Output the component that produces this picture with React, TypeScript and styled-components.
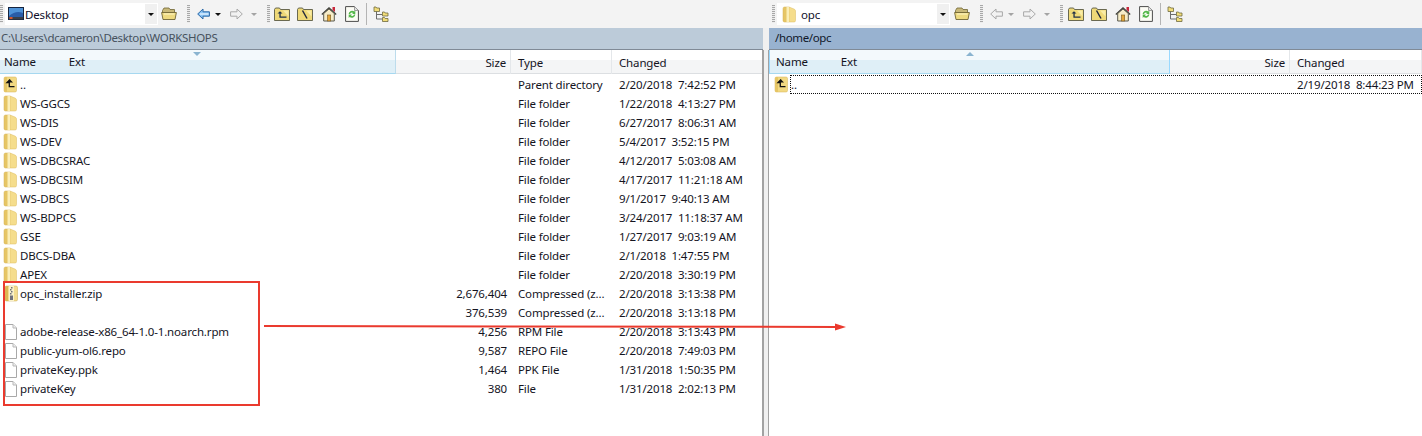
import React from "react";
import styled, {createGlobalStyle} from "styled-components";

const GlobalStyle = createGlobalStyle`
  html, body {
    margin: 0;
    padding: 0;
    background: #fff;
  }
  body {
    font-family: "Noto Sans", "Open Sans", sans-serif;
    font-size: 11.5px;
    letter-spacing: -0.15px;
    color: #111;
  }
`;

const Window = styled.div`
  position: relative;
  width: 1422px;
  height: 436px;
  overflow: hidden;
  display: grid;
  grid-template-columns: 763px 6px 653px;
  grid-template-rows: 28px 1fr;
  background: #f0f0f0;
`;

const Toolbar = styled.div<{$left: number}>`
  grid-row: 1;
  display: flex;
  align-items: center;
  height: 28px;
  padding-left: ${p => p.$left}px;
  background: #f3f3f3;
`;

const ToolbarGap = styled.div`
  grid-row: 1;
  background: #f3f3f3;
`;

const Grip = styled.span<{$ml: number}>`
  width: 3px;
  height: 18px;
  margin-left: ${p => p.$ml}px;
  flex: none;
  background: repeating-linear-gradient(to bottom, #a8a8a8 0 1px, #ededed 1px 2px);
`;

const Combo = styled.div<{$width: number}>`
  width: ${p => p.$width}px;
  height: 22px;
  margin-left: 2px;
  flex: none;
  display: flex;
  align-items: center;
  background: #fff;
  padding-left: 3px;
  box-sizing: border-box;
  color: #10102a;
`;

const ComboLabel = styled.span`
  flex: 1;
  margin-left: 1px;
`;

const ComboFolder = styled.span`
  display: flex;
  margin-right: 3px;
`;

const ComboButton = styled.span`
  width: 12px;
  height: 20px;
  margin-right: 1px;
  display: flex;
  align-items: center;
  justify-content: center;
  background: #f0f0f0;
`;

const Caret = styled.span<{$off?: boolean}>`
  width: 0;
  height: 0;
  border-left: 3px solid transparent;
  border-right: 3px solid transparent;
  border-top: 3px solid ${p => (p.$off ? "#a4a4a4" : "#111")};
`;

const ToolIcon = styled.span<{$ml: number; $w?: number}>`
  display: flex;
  flex: none;
  align-items: center;
  justify-content: center;
  width: ${p => p.$w ?? 16}px;
  height: 18px;
  margin-left: ${p => p.$ml}px;
`;

const ToolSep = styled.span<{$ml: number}>`
  width: 1px;
  height: 22px;
  margin-left: ${p => p.$ml}px;
  flex: none;
  background: #b4b4b4;
`;

const Pane = styled.div`
  grid-row: 2;
  display: flex;
  flex-direction: column;
  min-width: 0;
`;

const PathBar = styled.div<{$active?: boolean}>`
  height: 22px;
  line-height: 20px;
  padding-left: ${p => (p.$active ? 6 : 1)}px;
  box-sizing: border-box;
  background: ${p => (p.$active ? "#98b2d0" : "#bccbd9")};
  color: ${p => (p.$active ? "#10182a" : "#47525e")};
  border-bottom: 1px solid #808a96;
  letter-spacing: -0.35px;
`;

const Divider = styled.div`
  grid-row: 2;
  background: #f0f0f0;
  position: relative;
  &::after {
    content: "";
    position: absolute;
    left: -1px;
    right: 0;
    top: 22px;
    bottom: 0;
    border-left: 2px solid #a2a2a2;
    border-right: 1px solid #a2a2a2;
  }
`;

const List = styled.div`
  flex: 1;
  background: #fff;
`;

const Header = styled.div<{$cols: string}>`
  position: relative;
  display: grid;
  grid-template-columns: ${p => p.$cols};
  height: 24px;
  box-sizing: border-box;
  background: linear-gradient(to bottom, #fff 0 10px, #f4f5f6 10px 23px);
  border-bottom: 1px solid #dcdfe2;
`;

const HeaderCell = styled.div<{$sorted?: boolean; $right?: boolean; $pad: number; $inset?: boolean}>`
  display: flex;
  align-items: center;
  justify-content: ${p => (p.$right ? "flex-end" : "flex-start")};
  height: 24px;
  box-sizing: border-box;
  ${p => (p.$right ? `padding-right: ${p.$pad}px;` : `padding-left: ${p.$pad}px;`)}
  border-right: 1px solid #e4e7ea;
  color: #14141e;
  ${p =>
    p.$sorted &&
    `background: linear-gradient(to bottom, #f3f9fc 0 10px, #dfeff7 10px 23px);
     border-bottom: 1px solid #a6d8f0;
     border-right: 1px solid ${p.$inset ? "#99d9ff" : "#bcdcec"};
     ${p.$inset ? "border-left: 1px solid #99d9ff;" : ""}`}
`;

const ExtLabel = styled.span`
  margin-left: 33px;
`;

const SortMark = styled.span<{$x: number; $up?: boolean}>`
  position: absolute;
  left: ${p => p.$x}px;
  top: 2px;
  width: 0;
  height: 0;
  border-left: 4px solid transparent;
  border-right: 4px solid transparent;
  ${p => (p.$up ? "border-bottom: 4px solid #8ab4d0;" : "border-top: 4px solid #8ab4d0;")}
`;

const Rows = styled.div`
  padding-top: 1px;
`;

const Row = styled.div<{$cols: string}>`
  position: relative;
  display: grid;
  grid-template-columns: ${p => p.$cols};
  height: 19px;
  box-sizing: border-box;
  padding-bottom: 1px;
  align-items: center;
  white-space: pre;
  color: #14141e;
`;

const FocusRing = styled.span`
  position: absolute;
  left: 21px;
  right: 0;
  top: 0;
  bottom: 0;
  border: 1px dotted #111;
`;

const NameCell = styled.div<{$inset: number}>`
  display: flex;
  align-items: center;
  padding-left: ${p => p.$inset}px;
  min-width: 0;
`;

const NameText = styled.span`
  margin-left: 2px;
`;

const SizeCell = styled.div<{$pad: number}>`
  text-align: right;
  padding-right: ${p => p.$pad}px;
`;

const PlainCell = styled.div`
  padding-left: 7px;
`;

const Callout = styled.div`
  position: absolute;
  left: 3px;
  top: 281px;
  width: 257px;
  height: 125px;
  box-sizing: border-box;
  border: 2px solid #ea3a2e;
`;

const ArrowLine = styled.svg`
  position: absolute;
  left: 264px;
  top: 320px;
`;

// vista style folder, a narrow tall book shape in the file list
const FolderIcon = () => (
    <svg width="17" height="17" viewBox="0 0 17 17">
        <path d="M3 2.5 Q3 1 4.5 1 H9 V16 H4.5 Q3 16 3 14.5 Z" fill="#e6c564" stroke="#d4b354" strokeWidth=".5" />
        <path d="M9 1 L14 3 Q15.5 3.6 15.5 5 V14.5 Q15.5 16 14 16 H9 Z" fill="#f5dd8c" stroke="#dcbd60" strokeWidth=".5" />
        <path d="M6.5 1 H9 V16 H6.5 Z" fill="#fbeeb6" />
    </svg>
);

const ParentIcon = () => (
    <svg width="17" height="17" viewBox="0 0 17 17">
        <path d="M3 2.5 Q3 1 4.5 1 H14 Q15.5 1 15.5 2.5 V14.5 Q15.5 16 14 16 H4.5 Q3 16 3 14.5 Z" fill="#f2d982" stroke="#d4b354" strokeWidth=".5" />
        <path d="M3 2.5 Q3 1 4.5 1 H6 V16 H4.5 Q3 16 3 14.5 Z" fill="#e6c564" />
        <path d="M9 3.5 L6 6.5 H8.3 V10.6 H13.5" fill="none" stroke="#111" strokeWidth="1.3" />
        <path d="M9 3.5 L6 6.5 H12 Z" fill="#111" />
    </svg>
);

const ZipIcon = () => (
    <svg width="17" height="17" viewBox="0 0 17 17">
        <path d="M4 2.5 Q4 1 5.5 1 H15 Q16.5 1 16.5 2.5 V14.5 Q16.5 16 15 16 H5.5 Q4 16 4 14.5 Z" fill="#f3dc90" stroke="#c8a94e" strokeWidth=".5" />
        <path d="M4 2.5 Q4 1 5.5 1 H7 V16 H5.5 Q4 16 4 14.5 Z" fill="#dcb654" />
        <path d="M8 1 H13 V16 H8 Z" fill="#fbf2c8" />
        <path d="M10 2 H11.5 V3.5 H10 Z M9 4 H10.5 V5.5 H9 Z M10 6 H11.5 V7.5 H10 Z M9 8 H10.5 V9.5 H9 Z M9 10.5 H12 V15 H9 Z" fill="#70707c" />
    </svg>
);

const PageIcon = () => (
    <svg width="17" height="17" viewBox="0 0 17 17">
        <path d="M4.5 1.5 H12 L15.5 5 V16.5 H4.5 Z" fill="#fff" stroke="#a8a8a8" />
        <path d="M12 1.5 V5 H15.5" fill="#eee" stroke="#b8b8b8" />
    </svg>
);

const DesktopIcon = () => (
    <svg width="16" height="14" viewBox="0 0 16 14">
        <rect x=".5" y=".5" width="15" height="12" fill="#2a5da8" stroke="#16243e" />
        <path d="M1 1 H15 V6 Q8 3 1 9 Z" fill="#4f93d8" />
        <rect x="1" y="10" width="14" height="2.5" fill="#3a3f48" />
        <rect x="1.5" y="10" width="3" height="2" fill="#d8562c" />
    </svg>
);

const OpenFolderIcon = () => (
    <svg width="16" height="14" viewBox="0 0 16 14">
        <path d="M1.5 3.5 L3 1 H8 L9 2.5 H13.5 V6 H1.5 Z" fill="#c8b878" stroke="#6f6434" strokeWidth=".8" />
        <path d="M.6 5.5 H15.4 L14 12.5 H2 Z" fill="#eeda80" stroke="#6f6434" strokeWidth=".9" />
        <path d="M3 7 H13.5" stroke="#fff6c8" />
    </svg>
);

const ArrowIcon = ({dir, off}: {dir: "left" | "right"; off?: boolean}) => (
    <svg width="13" height="12" viewBox="0 0 13 12">
        <path
            d={dir === "left" ? "M.7 6 L6 1 V3.8 H12.4 V8.2 H6 V11 Z" : "M12.3 6 L7 1 V3.8 H.6 V8.2 H7 V11 Z"}
            fill={off ? "#f2f2f2" : "#8cc4f4"}
            stroke={off ? "#a8a8a8" : "#2d6aa8"}
        />
        {!off && <path d="M3 6 H11.5" stroke="#e2f2ff" strokeWidth="1.4" />}
    </svg>
);

const ToolFolder = ({kind}: {kind: "up" | "root"}) => (
    <svg width="16" height="14" viewBox="0 0 16 14">
        <path d="M.5 2.5 L1.5 1 H5.5 L6.5 2.5 H15.5 V13.5 H.5 Z" fill="#efd978" stroke="#5a5a44" strokeWidth=".9" />
        <path d="M9 3.5 H14.5 V9.5 Z" fill="#f9eca6" />
        {kind === "up" ? (
            <path d="M3.5 6.5 L6 4.2 L8.5 6.5 H6.7 V9.5 H12.5 V10.7 H5.4 V6.5 Z" fill="#203048" />
        ) : (
            <path d="M5.5 3.5 L10 11.5" stroke="#20283c" strokeWidth="1.4" />
        )}
    </svg>
);

const HomeIcon = () => (
    <svg width="16" height="16" viewBox="0 0 16 16">
        <path d="M11.5 1 H14 V6 L11.5 4 Z" fill="#c8283c" />
        <path d="M.8 8.5 L8 1.8 L15.2 8.5" fill="#f7f0de" stroke="#3a3a34" strokeWidth="1.2" />
        <path d="M2.7 7.5 V15 H13.3 V7.5 L8 3 Z" fill="#f6ecc8" stroke="#4a4a40" strokeWidth=".9" />
        <rect x="6.5" y="9" width="3.2" height="6" fill="#e4a83c" stroke="#7c5a20" strokeWidth=".6" />
    </svg>
);

const RefreshIcon = () => (
    <svg width="14" height="16" viewBox="0 0 14 16">
        <path d="M.6 .6 H9.5 L13.4 4.5 V15.4 H.6 Z" fill="#fdfdf6" stroke="#4c4c4c" />
        <path d="M9.5 .6 V4.5 H13.4" fill="#e2e2e2" stroke="#7c7c7c" strokeWidth=".7" />
        <path d="M3.6 8 A3.6 3.6 0 0 1 9.4 5.6 L10.3 4.6 V8 H7 L8.2 6.9 A2.2 2.2 0 0 0 5 8 Z" fill="#54b84a" />
        <path d="M10.4 8.5 A3.6 3.6 0 0 1 4.6 10.9 L3.7 11.9 V8.5 H7 L5.8 9.6 A2.2 2.2 0 0 0 9 8.5 Z" fill="#54b84a" />
    </svg>
);

const TreeIcon = () => (
    <svg width="16" height="16" viewBox="0 0 16 16">
        <path d="M3.5 5 V13 H9 M3.5 8.5 H9" fill="none" stroke="#6c6c6c" />
        <path d="M1 1 H3 L3.7 2 H6.5 V5.5 H1 Z" fill="#f2dd78" stroke="#6e6a40" strokeWidth=".8" />
        <path d="M9.5 6 H11.5 L12.2 7 H15 V10 H9.5 Z" fill="#f2dd78" stroke="#6e6a40" strokeWidth=".8" />
        <path d="M9.5 11.5 H11.5 L12.2 12.5 H15 V15.5 H9.5 Z" fill="#f2dd78" stroke="#6e6a40" strokeWidth=".8" />
    </svg>
);

interface FileEntry {
    name: string;
    size?: string;
    type: string;
    changed: string;
    icon: "parent" | "folder" | "zip" | "page" | "none";
}

const localFiles: FileEntry[] = [
    {name: "..", type: "Parent directory", changed: "2/20/2018  7:42:52 PM", icon: "parent"},
    {name: "WS-GGCS", type: "File folder", changed: "1/22/2018  4:13:27 PM", icon: "folder"},
    {name: "WS-DIS", type: "File folder", changed: "6/27/2017  8:06:31 AM", icon: "folder"},
    {name: "WS-DEV", type: "File folder", changed: "5/4/2017  3:52:15 PM", icon: "folder"},
    {name: "WS-DBCSRAC", type: "File folder", changed: "4/12/2017  5:03:08 AM", icon: "folder"},
    {name: "WS-DBCSIM", type: "File folder", changed: "4/17/2017  11:21:18 AM", icon: "folder"},
    {name: "WS-DBCS", type: "File folder", changed: "9/1/2017  9:40:13 AM", icon: "folder"},
    {name: "WS-BDPCS", type: "File folder", changed: "3/24/2017  11:18:37 AM", icon: "folder"},
    {name: "GSE", type: "File folder", changed: "1/27/2017  9:03:19 AM", icon: "folder"},
    {name: "DBCS-DBA", type: "File folder", changed: "2/1/2018  1:47:55 PM", icon: "folder"},
    {name: "APEX", type: "File folder", changed: "2/20/2018  3:30:19 PM", icon: "folder"},
    {name: "opc_installer.zip", size: "2,676,404", type: "Compressed (z...", changed: "2/20/2018  3:13:38 PM", icon: "zip"},
    {name: "", size: "376,539", type: "Compressed (z...", changed: "2/20/2018  3:13:18 PM", icon: "none"},
    {name: "adobe-release-x86_64-1.0-1.noarch.rpm", size: "4,256", type: "RPM File", changed: "2/20/2018  3:13:43 PM", icon: "page"},
    {name: "public-yum-ol6.repo", size: "9,587", type: "REPO File", changed: "2/20/2018  7:49:03 PM", icon: "page"},
    {name: "privateKey.ppk", size: "1,464", type: "PPK File", changed: "1/31/2018  1:50:35 PM", icon: "page"},
    {name: "privateKey", size: "380", type: "File", changed: "1/31/2018  2:02:13 PM", icon: "page"},
];

const IconSlot = styled.span`
  width: 17px;
  height: 17px;
  flex: none;
`;

const entryIcon = (icon: FileEntry["icon"]) => {
    if (icon === "parent") return <ParentIcon />;
    if (icon === "folder") return <FolderIcon />;
    if (icon === "zip") return <ZipIcon />;
    if (icon === "page") return <PageIcon />;
    return <IconSlot />;
};

const LEFT_COLS = "396px 115px 101px 1fr";
const RIGHT_COLS = "401px 120px 1fr";

const App = () => (
    <Window>
        <GlobalStyle />

        <Toolbar $left={0}>
            <Grip $ml={0} />
            <Combo $width={153}>
                <DesktopIcon />
                <ComboLabel>Desktop</ComboLabel>
                <ComboButton><Caret /></ComboButton>
            </Combo>
            <ToolIcon $ml={3}><OpenFolderIcon /></ToolIcon>
            <Grip $ml={10} />
            <ToolIcon $ml={5}><ArrowIcon dir="left" /></ToolIcon>
            <ToolIcon $ml={3} $w={8}><Caret /></ToolIcon>
            <ToolIcon $ml={6}><ArrowIcon dir="right" off /></ToolIcon>
            <ToolIcon $ml={6} $w={8}><Caret $off /></ToolIcon>
            <Grip $ml={9} />
            <ToolIcon $ml={4}><ToolFolder kind="up" /></ToolIcon>
            <ToolIcon $ml={7}><ToolFolder kind="root" /></ToolIcon>
            <ToolIcon $ml={8}><HomeIcon /></ToolIcon>
            <ToolIcon $ml={7}><RefreshIcon /></ToolIcon>
            <ToolSep $ml={6} />
            <ToolIcon $ml={6}><TreeIcon /></ToolIcon>
        </Toolbar>
        <ToolbarGap />
        <Toolbar $left={3}>
            <Grip $ml={0} />
            <Combo $width={173}>
                <ComboFolder><FolderIcon /></ComboFolder>
                <ComboLabel>opc</ComboLabel>
                <ComboButton><Caret /></ComboButton>
            </Combo>
            <ToolIcon $ml={4}><OpenFolderIcon /></ToolIcon>
            <Grip $ml={10} />
            <ToolIcon $ml={5}><ArrowIcon dir="left" off /></ToolIcon>
            <ToolIcon $ml={3} $w={8}><Caret $off /></ToolIcon>
            <ToolIcon $ml={6}><ArrowIcon dir="right" off /></ToolIcon>
            <ToolIcon $ml={6} $w={8}><Caret $off /></ToolIcon>
            <Grip $ml={9} />
            <ToolIcon $ml={5}><ToolFolder kind="up" /></ToolIcon>
            <ToolIcon $ml={7}><ToolFolder kind="root" /></ToolIcon>
            <ToolIcon $ml={8}><HomeIcon /></ToolIcon>
            <ToolIcon $ml={7}><RefreshIcon /></ToolIcon>
            <ToolSep $ml={6} />
            <ToolIcon $ml={6}><TreeIcon /></ToolIcon>
        </Toolbar>

        <Pane>
            <PathBar>C:\Users\dcameron\Desktop\WORKSHOPS</PathBar>
            <List>
                <Header $cols={LEFT_COLS}>
                    <HeaderCell $sorted $pad={4}>Name<ExtLabel>Ext</ExtLabel></HeaderCell>
                    <HeaderCell $right $pad={4}>Size</HeaderCell>
                    <HeaderCell $pad={7}>Type</HeaderCell>
                    <HeaderCell $pad={7}>Changed</HeaderCell>
                    <SortMark $x={193} />
                </Header>
                <Rows>
                    {localFiles.map(file => (
                        <Row key={file.name + file.changed} $cols={LEFT_COLS}>
                            <NameCell $inset={1}>
                                {entryIcon(file.icon)}
                                <NameText>{file.name}</NameText>
                            </NameCell>
                            <SizeCell $pad={4}>{file.size}</SizeCell>
                            <PlainCell>{file.type}</PlainCell>
                            <PlainCell>{file.changed}</PlainCell>
                        </Row>
                    ))}
                </Rows>
            </List>
        </Pane>
        <Divider />
        <Pane>
            <PathBar $active>/home/opc</PathBar>
            <List>
                <Header $cols={RIGHT_COLS}>
                    <HeaderCell $sorted $inset $pad={6}>Name<ExtLabel>Ext</ExtLabel></HeaderCell>
                    <HeaderCell $right $pad={4}>Size</HeaderCell>
                    <HeaderCell $pad={7}>Changed</HeaderCell>
                    <SortMark $x={197} $up />
                </Header>
                <Rows>
                    <Row $cols={RIGHT_COLS}>
                        <FocusRing />
                        <NameCell $inset={3}>
                            <ParentIcon />
                            <NameText>..</NameText>
                        </NameCell>
                        <SizeCell $pad={4} />
                        <PlainCell>2/19/2018  8:44:23 PM</PlainCell>
                    </Row>
                </Rows>
            </List>
        </Pane>

        <Callout />
        <ArrowLine width="590" height="14" viewBox="0 0 590 14">
            <path d="M0 6 L574 7" stroke="#ea3a2e" strokeWidth="2" />
            <path d="M582 7 L571 3.5 V10.5 Z" fill="#ea3a2e" />
        </ArrowLine>
    </Window>
);

export default App;
